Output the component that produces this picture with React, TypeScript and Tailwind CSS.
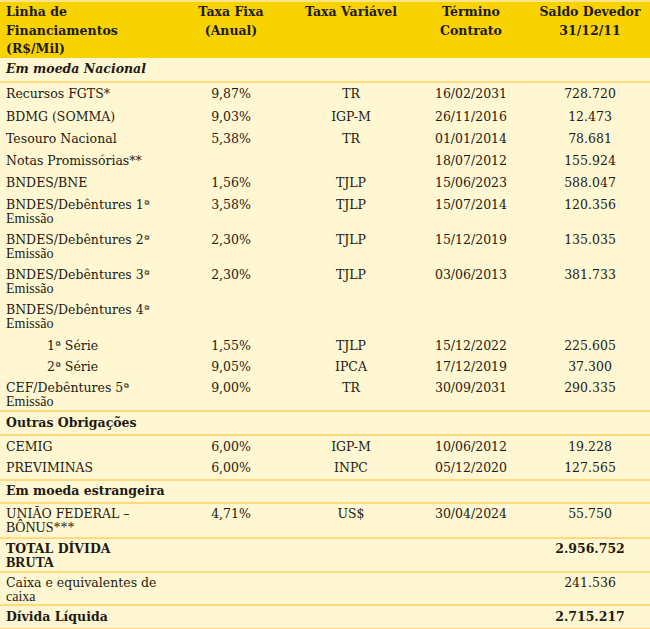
import React from 'react';

type Row = {
  label: string;
  label2?: string;
  fixa?: string;
  variavel?: string;
  termino?: string;
  saldo?: string;
  kind?: 'section' | 'sectionItalic' | 'total';
  indent?: boolean;
  line?: boolean;
  h: string;
};

const rows: Row[] = [
  { label: 'Em moeda Nacional', kind: 'sectionItalic', line: true, h: 'h-[25px]' },
  { label: 'Recursos FGTS*', fixa: '9,87%', variavel: 'TR', termino: '16/02/2031', saldo: '728.720', h: 'h-[23px]' },
  { label: 'BDMG (SOMMA)', fixa: '9,03%', variavel: 'IGP-M', termino: '26/11/2016', saldo: '12.473', h: 'h-[22px]' },
  { label: 'Tesouro Nacional', fixa: '5,38%', variavel: 'TR', termino: '01/01/2014', saldo: '78.681', h: 'h-[22px]' },
  { label: 'Notas Promissórias**', termino: '18/07/2012', saldo: '155.924', h: 'h-[22px]' },
  { label: 'BNDES/BNE', fixa: '1,56%', variavel: 'TJLP', termino: '15/06/2023', saldo: '588.047', h: 'h-[23px]' },
  { label: 'BNDES/Debêntures 1ª', label2: 'Emissão', fixa: '3,58%', variavel: 'TJLP', termino: '15/07/2014', saldo: '120.356', h: 'h-[35px]' },
  { label: 'BNDES/Debêntures 2ª', label2: 'Emissão', fixa: '2,30%', variavel: 'TJLP', termino: '15/12/2019', saldo: '135.035', h: 'h-[35px]' },
  { label: 'BNDES/Debêntures 3ª', label2: 'Emissão', fixa: '2,30%', variavel: 'TJLP', termino: '03/06/2013', saldo: '381.733', h: 'h-[35px]' },
  { label: 'BNDES/Debêntures 4ª', label2: 'Emissão', h: 'h-[35px]' },
  { label: '1ª Série', indent: true, fixa: '1,55%', variavel: 'TJLP', termino: '15/12/2022', saldo: '225.605', h: 'h-[22px]' },
  { label: '2ª Série', indent: true, fixa: '9,05%', variavel: 'IPCA', termino: '17/12/2019', saldo: '37.300', h: 'h-[21px]' },
  { label: 'CEF/Debêntures 5ª', label2: 'Emissão', fixa: '9,00%', variavel: 'TR', termino: '30/09/2031', saldo: '290.335', line: true, h: 'h-[34px]' },
  { label: 'Outras Obrigações', kind: 'section', line: true, h: 'h-[24px]' },
  { label: 'CEMIG', fixa: '6,00%', variavel: 'IGP-M', termino: '10/06/2012', saldo: '19.228', h: 'h-[22px]' },
  { label: 'PREVIMINAS', fixa: '6,00%', variavel: 'INPC', termino: '05/12/2020', saldo: '127.565', line: true, h: 'h-[23px]' },
  { label: 'Em moeda estrangeira', kind: 'section', line: true, h: 'h-[23px]' },
  { label: 'UNIÃO FEDERAL –', label2: 'BÔNUS***', fixa: '4,71%', variavel: 'US$', termino: '30/04/2024', saldo: '55.750', line: true, h: 'h-[35px]' },
  { label: 'TOTAL DÍVIDA', label2: 'BRUTA', kind: 'total', saldo: '2.956.752', line: true, h: 'h-[34px]' },
  { label: 'Caixa e equivalentes de', label2: 'caixa', saldo: '241.536', line: true, h: 'h-[33px]' },
  { label: 'Dívida Líquida', kind: 'section', saldo: '2.715.217', line: true, h: 'h-[24px]' },
];

const cols = 'grid grid-cols-[172px_118px_122px_118px_120px]';

function BodyRow({ r }: { r: Row }) {
  const bold = r.kind === 'section' || r.kind === 'total' || r.kind === 'sectionItalic';
  const double = !!r.label2;
  const cell = double ? 'pt-[3px] leading-[14px]' : 'flex items-center';
  return (
    <div
      className={`${cols} ${r.h} ${r.line ? 'border-b-2 border-[#ffd97c]' : ''} ${
        bold ? 'font-bold' : ''
      } ${r.kind === 'sectionItalic' ? 'italic' : ''}`}
    >
      <div className={`${cell} ${r.indent ? 'pl-[47px]' : 'pl-[6px]'} pr-1`}>
        <div>
          <div className="whitespace-nowrap">{r.label}</div>
          {r.label2 && (
            <div className="font-['Liberation_Serif',serif] text-[14px] leading-[13px]">{r.label2}</div>
          )}
        </div>
      </div>
      <div className={`${cell} justify-center text-center`}>{r.fixa}</div>
      <div className={`${cell} justify-center text-center`}>{r.variavel}</div>
      <div className={`${cell} justify-center text-center`}>{r.termino}</div>
      <div className={`${cell} justify-center text-center`}>{r.saldo}</div>
    </div>
  );
}

export default function App() {
  return (
    <div className="w-[650px] h-[629px] overflow-hidden bg-[#fff7d1] font-['DejaVu_Serif',serif] text-[12.5px] text-[#1e1a14]">
      <div className={`${cols} h-[58px] border-t-2 border-[#ffe48a] bg-[#f8d300] font-bold leading-[18.5px] pt-[1px]`}>
        <div className="pl-[6px]">
          Linha de
          <br />
          Financiamentos
          <br />
          (R$/Mil)
        </div>
        <div className="text-center">
          Taxa Fixa
          <br />
          (Anual)
        </div>
        <div className="text-center">Taxa Variável</div>
        <div className="text-center">
          Término
          <br />
          Contrato
        </div>
        <div className="text-center">
          Saldo Devedor
          <br />
          31/12/11
        </div>
      </div>
      {rows.map((r, i) => (
        <BodyRow key={i} r={r} />
      ))}
    </div>
  );
}
